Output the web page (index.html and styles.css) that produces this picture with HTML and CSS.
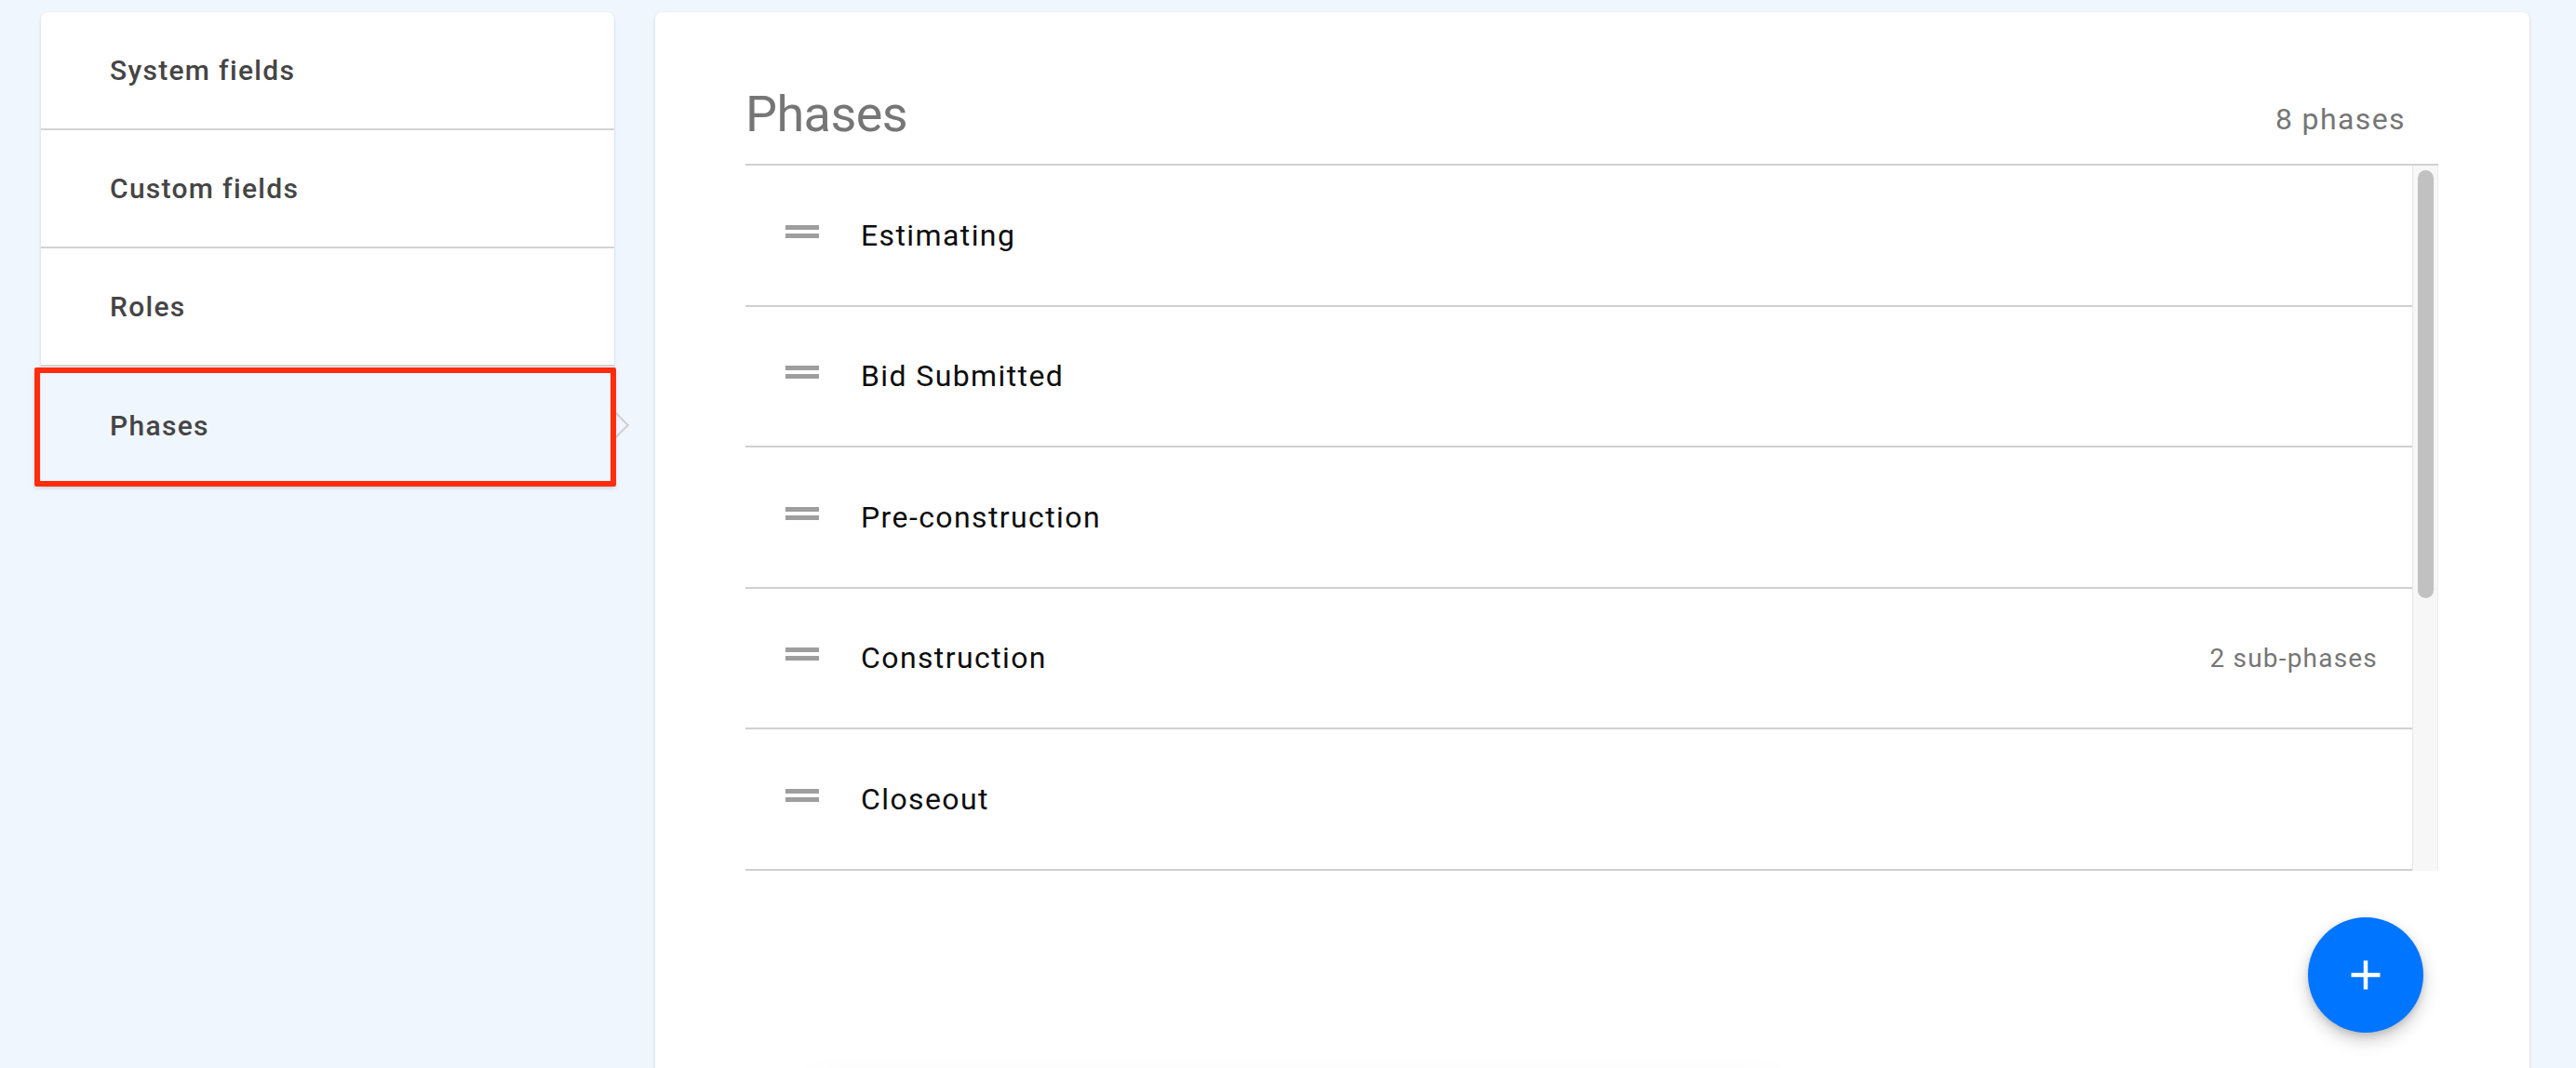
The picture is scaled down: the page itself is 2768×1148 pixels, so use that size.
FILE: index.html
```html
<!DOCTYPE html>
<html lang="en">
<head>
<meta charset="utf-8">
<title>Phases</title>
<link rel="stylesheet" href="styles.css">
</head>
<body>
<div class="page">
  <nav class="sidebar">
    <a class="nav-item">System fields</a>
    <a class="nav-item">Custom fields</a>
    <a class="nav-item">Roles</a>
    <a class="nav-item active">Phases<span class="highlight"></span></a>
  </nav>
  <main class="panel">
    <header class="panel-header">
      <h1 class="panel-title">Phases</h1>
      <span class="panel-count">8 phases</span>
    </header>
    <div class="list-wrap">
      <ul class="phase-list">
        <li class="phase"><span class="handle"></span><span class="phase-name">Estimating</span></li>
        <li class="phase"><span class="handle"></span><span class="phase-name">Bid Submitted</span></li>
        <li class="phase"><span class="handle"></span><span class="phase-name">Pre-construction</span></li>
        <li class="phase"><span class="handle"></span><span class="phase-name">Construction</span><span class="phase-meta">2 sub-phases</span></li>
        <li class="phase"><span class="handle"></span><span class="phase-name">Closeout</span></li>
      </ul>
      <div class="scrollbar"><div class="thumb"></div></div>
    </div>
    <div class="actions">
      <button class="fab" type="button" aria-label="Add phase">
        <svg width="34" height="34" viewBox="0 0 34 34" aria-hidden="true">
          <path d="M17 1.5v31M1.5 17h31" stroke="#fff" stroke-width="4.5" fill="none"/>
        </svg>
      </button>
    </div>
  </main>
</div>
<div class="footer-shadow"></div>
</body>
</html>
```

FILE: styles.css
```css
html, body {
  margin: 0;
  height: 1148px;
  overflow: hidden;
}
body {
  background: #eff6fe;
  font-family: Roboto, "Noto Sans", "Liberation Sans", Arial, sans-serif;
}
.page {
  display: flex;
  align-items: flex-start;
  gap: 44px;
  padding: 13px 50px 0 44px;
}

/* Sidebar */
.sidebar {
  width: 616px;
  flex: none;
  display: flex;
  flex-direction: column;
  background: #fff;
  border-radius: 8px 8px 0 0;
  box-shadow: 0 1px 3px rgba(0, 0, 0, 0.10), 0 2px 4px rgba(0, 0, 0, 0.05);
}
.nav-item {
  position: relative;
  display: flex;
  align-items: center;
  height: 127px;
  box-sizing: border-box;
  padding-left: 74px;
  border-bottom: 2px solid #d3d3d3;
  font-size: 30px;
  letter-spacing: 1.3px;
  font-weight: 500;
  color: #454545;
  cursor: pointer;
}
.nav-item.active {
  background: #eff6fe;
  border-bottom: none;
}
.nav-item.active::after {
  content: "";
  position: absolute;
  left: calc(100% - 8px);
  top: 50%;
  width: 20px;
  height: 20px;
  margin-top: -11px;
  box-sizing: border-box;
  background: #eff6fe;
  border-top: 2px solid #d0d0d0;
  border-right: 2px solid #d0d0d0;
  transform: rotate(45deg);
}
.highlight {
  position: absolute;
  top: 1px;
  left: -7px;
  right: -2px;
  bottom: -2px;
  border: 6px solid #ff2d0e;
  border-radius: 2px;
  z-index: 2;
  box-shadow: 0 2px 4px rgba(0, 0, 0, 0.12);
}

/* Main panel */
.panel {
  flex: 1;
  min-height: 1200px;
  box-sizing: border-box;
  padding: 0 98px 0 97px;
  background: #fff;
  border-radius: 8px 8px 0 0;
  box-shadow: 0 1px 3px rgba(0, 0, 0, 0.10), 0 2px 4px rgba(0, 0, 0, 0.05);
}
.panel-header {
  display: flex;
  align-items: flex-end;
  justify-content: space-between;
  padding: 82px 35px 25px 0;
  border-bottom: 2px solid #d0d0d0;
}
.panel-title {
  margin: 0;
  font-size: 54px;
  line-height: 56px;
  letter-spacing: -0.6px;
  font-weight: 400;
  color: #767676;
}
.panel-count {
  font-size: 32px;
  line-height: 46px;
  letter-spacing: 1.4px;
  color: #767676;
}
.list-wrap {
  display: flex;
}
.phase-list {
  flex: 1;
  list-style: none;
  margin: 0;
  padding: 0;
}
.phase {
  display: flex;
  align-items: center;
  height: 151.5px;
  box-sizing: border-box;
  padding: 0 37px 0 43px;
  border-bottom: 2px solid #d0d0d0;
}
.handle {
  flex: none;
  width: 36px;
  height: 4px;
  border-top: 5px solid #9e9e9e;
  border-bottom: 5px solid #9e9e9e;
  margin: 0 45px 8px 0;
}
.phase-name {
  flex: 1;
  font-size: 32px;
  letter-spacing: 1.4px;
  color: #0d0d0d;
}
.phase-meta {
  font-size: 28px;
  letter-spacing: 1.2px;
  color: #767676;
}
.scrollbar {
  flex: none;
  width: 28px;
  box-sizing: border-box;
  padding: 5px 4px 0 5px;
  background: #f7f7f7;
  border-left: 1px solid #e6e6e6;
  border-right: 1px solid #ededed;
}
.thumb {
  height: 460px;
  border-radius: 9px;
  background: #c1c1c1;
}
.actions {
  display: flex;
  justify-content: flex-end;
  padding: 50px 16px 0 0;
}
.fab {
  width: 124px;
  height: 124px;
  padding: 0;
  border: 0;
  border-radius: 50%;
  background: #0075ff;
  display: flex;
  align-items: center;
  justify-content: center;
  box-shadow: 0 8px 18px rgba(0, 0, 0, 0.20), 0 3px 6px rgba(0, 0, 0, 0.12);
  cursor: pointer;
}
.footer-shadow {
  position: fixed;
  left: 860px;
  top: 1165px;
  width: 1060px;
  height: 60px;
  border-radius: 30px;
  box-shadow: 0 0 40px rgba(0, 0, 0, 0.05);
}
```
